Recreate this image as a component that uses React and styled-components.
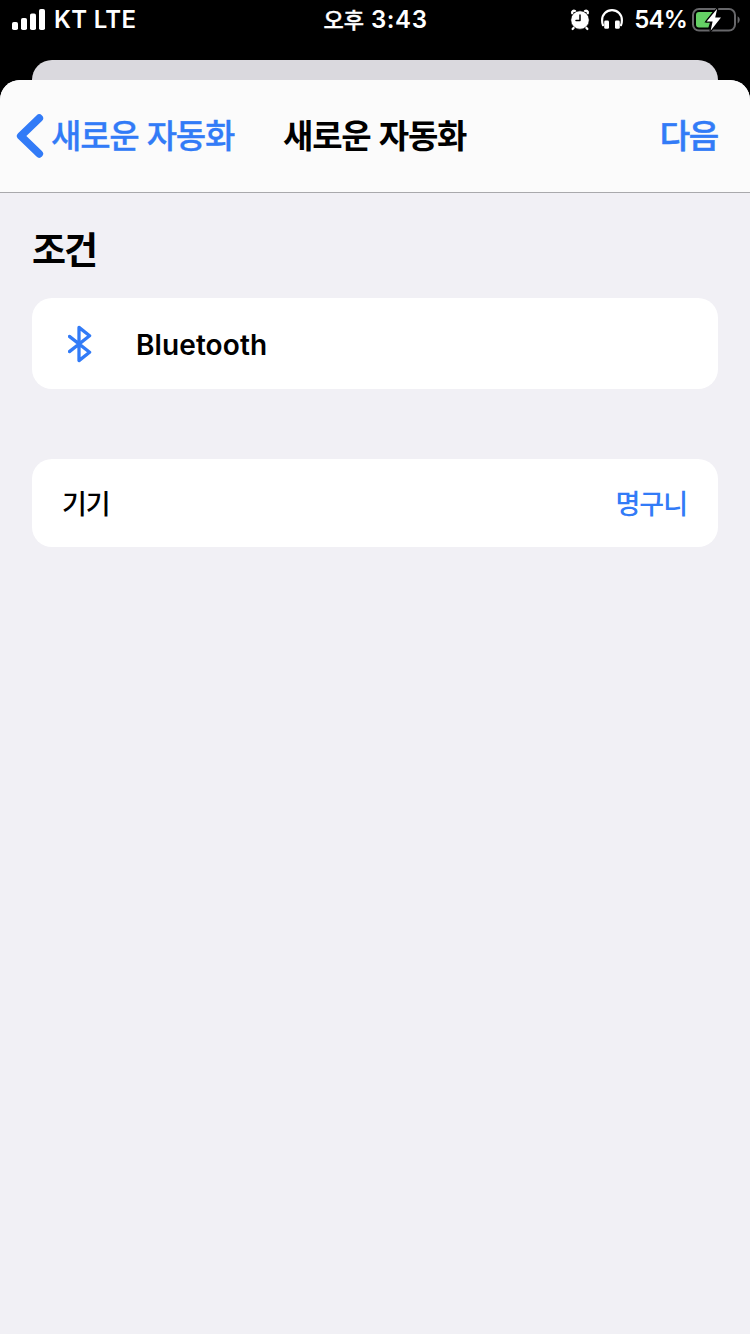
import React from 'react';
import styled, { createGlobalStyle } from 'styled-components';

const COLORS = {
  black: '#000',
  white: '#fff',
  blue: '#327bf7',
  green: '#65d065',
  battery: '#67676a',
  behind: '#dad9de',
  bar: '#fbfbfb',
  hairline: '#a9a9ac',
  background: '#f1f0f5'
};

const App = () => {
  return (
    <Screen>
      <GlobalStyle />
      <StatusBar>
        <Carrier>
          <SignalIcon />
          <CarrierName>KT LTE</CarrierName>
        </Carrier>
        <Clock>
          <Meridiem>오후</Meridiem>
          <Time>3:43</Time>
        </Clock>
        <Indicators>
          <AlarmIcon />
          <HeadphonesIcon />
          <Percent>54%</Percent>
          <BatteryIcon />
        </Indicators>
      </StatusBar>
      <SheetBehind />
      <Sheet>
        <NavBar>
          <BackButton>
            <ChevronIcon />
            <NavText>새로운 자동화</NavText>
          </BackButton>
          <Title>새로운 자동화</Title>
          <NextButton>다음</NextButton>
        </NavBar>
        <Content>
          <SectionTitle>조건</SectionTitle>
          <TriggerCard>
            <BluetoothIcon />
            <TriggerName>Bluetooth</TriggerName>
          </TriggerCard>
          <DeviceCard>
            <DeviceLabel>기기</DeviceLabel>
            <DeviceValue>명구니</DeviceValue>
          </DeviceCard>
        </Content>
      </Sheet>
    </Screen>
  );
};

const SignalIcon = () => (
  <Icon width='33' height='22' viewBox='0 0 33 22' fill={COLORS.white}>
    <rect x='0' y='13' width='6' height='8' rx='1.8' />
    <rect x='9' y='9' width='6' height='12' rx='1.8' />
    <rect x='18' y='4.5' width='6' height='16.5' rx='1.8' />
    <rect x='27' y='0' width='6' height='21' rx='1.8' />
  </Icon>
);

const AlarmIcon = () => (
  <Icon width='20' height='24' viewBox='0 0 20 24' fill='none'>
    <path
      d='M2.3 5.2C1.6 3.4 3.4 2.4 5 3M17.7 5.2C18.4 3.4 16.6 2.4 15 3'
      stroke={COLORS.white}
      strokeWidth='2.4'
      strokeLinecap='round'
    />
    <path
      d='M4.6 18.8L2.6 21M15.4 18.8L17.4 21'
      stroke={COLORS.white}
      strokeWidth='2.2'
      strokeLinecap='round'
    />
    <circle cx='10' cy='12' r='9.2' fill={COLORS.white} stroke={COLORS.black} strokeWidth='0.6' />
    <path d='M10 7V12.6H6' stroke={COLORS.black} strokeWidth='1.5' strokeLinecap='round' strokeLinejoin='round' />
  </Icon>
);

const HeadphonesIcon = () => (
  <Icon width='22' height='22' viewBox='0 0 22 22' fill='none'>
    <path
      d='M2 16.2C1.2 14.6 1.1 13 1.1 11.2C1.1 5.4 5.4 1.2 11 1.2S20.9 5.4 20.9 11.2C20.9 13 20.8 14.6 20 16.2'
      stroke={COLORS.white}
      strokeWidth='2.2'
      strokeLinecap='round'
    />
    <rect x='3.2' y='11.6' width='4.8' height='8.2' rx='1.4' fill={COLORS.white} />
    <rect x='14' y='11.6' width='4.8' height='8.2' rx='1.4' fill={COLORS.white} />
  </Icon>
);

const BatteryIcon = () => (
  <Icon width='48' height='24' viewBox='0 0 48 24' fill='none'>
    <rect x='1' y='1' width='42' height='21.6' rx='6' stroke={COLORS.battery} strokeWidth='2' />
    <path d='M45.6 8.2C48.4 9.6 48.4 14 45.6 15.4Z' fill={COLORS.battery} />
    <path d='M7 4H20.6L12.4 14.6H18L16.4 19.6H7Q4 19.6 4 16.6V7Q4 4 7 4Z' fill={COLORS.green} />
    {/* black edge separates the bolt from the outline */}
    <path
      d='M25.2 0.8L14.6 13.4H20.6L18.6 22.8L29 9.6H23.2Z'
      fill={COLORS.white}
      stroke={COLORS.black}
      strokeWidth='2.2'
      strokeLinejoin='round'
      paintOrder='stroke'
    />
  </Icon>
);

const ChevronIcon = () => (
  <Icon width='28' height='44' viewBox='0 0 28 44' fill='none'>
    <path
      d='M23.2 4.2L4.8 22L23.2 39.8'
      stroke={COLORS.blue}
      strokeWidth='7.8'
      strokeLinecap='round'
      strokeLinejoin='round'
    />
  </Icon>
);

const BluetoothIcon = () => (
  <Icon width='24' height='38' viewBox='0 0 24 38' fill='none'>
    <path
      d='M1.4 11.4L21.6 27.2L11 35.6V2.4L21.6 10.8L1.4 26.6'
      stroke={COLORS.blue}
      strokeWidth='3.3'
      strokeLinecap='round'
      strokeLinejoin='round'
    />
  </Icon>
);

const GlobalStyle = createGlobalStyle`
  * {
    box-sizing: border-box;
  }

  body {
    margin: 0;
    background-color: ${COLORS.black};
    font-family: Inter, 'Noto Sans CJK KR', sans-serif;
  }
`;

const Screen = styled.div`
  width: 750px;
  height: 1334px;
  overflow: hidden;
  background-color: ${COLORS.black};

  display: flex;
  flex-direction: column;
`;

const StatusBar = styled.header`
  height: 40px;
  margin-bottom: 20px;
  padding: 0 10px 0 12px;

  display: grid;
  grid-template-columns: 1fr auto 1fr;
  align-items: center;

  font-size: 24px;
  font-weight: 600;
  line-height: 40px;
  color: ${COLORS.white};
`;

const Icon = styled.svg`
  display: block;
  flex-shrink: 0;
`;

const Carrier = styled.div`
  display: flex;
  align-items: center;
`;

const CarrierName = styled.span`
  margin-left: 9px;
  letter-spacing: 0.3px;
`;

const Clock = styled.div`
  margin-right: 1px;

  display: flex;
  align-items: center;
  gap: 7px;
`;

const Meridiem = styled.span`
  padding-bottom: 3px;
  font-family: 'Noto Sans CJK KR', sans-serif;
  font-size: 22px;
  font-weight: 500;
  line-height: 37px;
  -webkit-text-stroke: 0.4px currentColor;
`;

const Time = styled.span`
  letter-spacing: 0.6px;
`;

const Indicators = styled.div`
  display: flex;
  align-items: center;
  justify-content: flex-end;
  gap: 11px;
`;

const Percent = styled.span`
  margin-right: -6px;
  letter-spacing: -0.8px;
`;

const SheetBehind = styled.div`
  height: 20px;
  margin: 0 32px;
  flex-shrink: 0;
  border-radius: 20px 20px 0 0;
  background-color: ${COLORS.behind};
`;

const Sheet = styled.main`
  flex: 1;
  overflow: hidden;
  border-radius: 20px 20px 0 0;
  background-color: ${COLORS.background};
`;

const NavBar = styled.nav`
  height: 113px;
  padding: 0 32px 0 16px;
  border-bottom: 1px solid ${COLORS.hairline};
  background-color: ${COLORS.bar};

  display: grid;
  grid-template-columns: 267px 1fr auto;
  align-items: center;

  font-family: 'Noto Sans CJK KR', sans-serif;
  font-size: 33px;
  font-weight: 500;
  line-height: 44px;
  letter-spacing: -1.2px;
  word-spacing: 2px;
`;

const BackButton = styled.a`
  display: flex;
  align-items: center;
  gap: 7px;
  color: ${COLORS.blue};
`;

const NavText = styled.span`
  padding-bottom: 4px;
  white-space: nowrap;
  -webkit-text-stroke: 0.3px currentColor;
`;

const Title = styled.h1`
  margin: 0;
  padding-bottom: 4px;
  font-size: inherit;
  font-weight: 700;
  color: ${COLORS.black};
`;

const NextButton = styled.a`
  padding-bottom: 4px;
  color: ${COLORS.blue};
  -webkit-text-stroke: 0.6px currentColor;
`;

const Content = styled.div`
  padding: 31px 32px;
`;

const SectionTitle = styled.h2`
  margin: 0 0 26px;
  font-family: 'Noto Sans CJK KR', sans-serif;
  font-size: 37px;
  font-weight: 700;
  line-height: 48px;
  letter-spacing: -2px;
`;

const Card = styled.section`
  border-radius: 20px;
  background-color: ${COLORS.white};

  display: flex;
  align-items: center;
`;

const TriggerCard = styled(Card)`
  height: 91px;
  margin-bottom: 70px;
  padding-left: 36px;
`;

const TriggerName = styled.span`
  margin-left: 44px;
  padding-top: 2px;
  font-size: 28px;
  font-weight: 600;
  letter-spacing: 0.1px;
`;

const DeviceCard = styled(Card)`
  height: 88px;
  padding: 0 31px 2px 30px;
  justify-content: space-between;

  font-family: 'Noto Sans CJK KR', sans-serif;
  font-size: 27px;
  font-weight: 500;
  letter-spacing: -1px;
`;

const DeviceLabel = styled.span`
  color: ${COLORS.black};
`;

const DeviceValue = styled.span`
  color: ${COLORS.blue};
`;

export default App;
